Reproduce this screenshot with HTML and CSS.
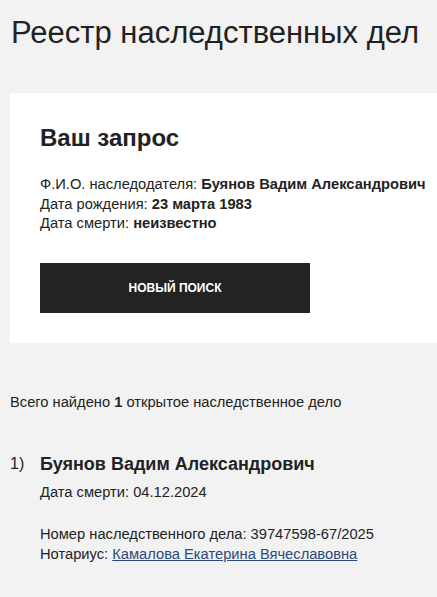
FILE: index.html
```html
<!DOCTYPE html>
<html>
<head>
  <meta charset="utf-8">
  <title>Реестр наследственных дел</title>
  <link rel="stylesheet" href="styles.css">
</head>
<body>
  <div class="page">
    <h1 class="title">Реестр наследственных дел</h1>

    <div class="card">
      <h2 class="card-title">Ваш запрос</h2>
      <div class="query">
        <div>Ф.И.О. наследодателя: <b>Буянов Вадим Александрович</b></div>
        <div>Дата рождения: <b>23 марта 1983</b></div>
        <div>Дата смерти: <b>неизвестно</b></div>
      </div>
      <div class="button">НОВЫЙ ПОИСК</div>
    </div>

    <div class="total">Всего найдено <b>1</b> открытое наследственное дело</div>

    <div class="result">
      <div class="result-num">1)</div>
      <div class="result-body">
        <div class="result-name">Буянов Вадим Александрович</div>
        <div class="result-line">Дата смерти: 04.12.2024</div>
        <div class="result-info">
          <div>Номер наследственного дела: 39747598-67/2025</div>
          <div>Нотариус: <a href="#" class="link">Камалова Екатерина Вячеславовна</a></div>
        </div>
      </div>
    </div>
  </div>
</body>
</html>
```

FILE: styles.css
```css
body {
  margin: 0;
  background-color: #f2f2f2;
  color: #222;
  font-family: "Liberation Sans", Arial, sans-serif;
  overflow: hidden;
}

.page {
  padding: 14px 0 20px 10px;
}

.title {
  margin: 0 0 0 1px;
  font-size: 31px;
  font-weight: normal;
  line-height: 38px;
  white-space: nowrap;
}

.card {
  margin-top: 41px;
  background-color: #fff;
  padding: 30px 0 30px 30px;
}

.card-title {
  margin: 0;
  font-size: 24px;
  font-weight: bold;
  line-height: 30px;
}

.query {
  margin-top: 22px;
  font-size: 14.7px;
  line-height: 19.5px;
  white-space: nowrap;
}

.button {
  margin-top: 29.5px;
  width: 270px;
  height: 50px;
  background-color: #232323;
  color: #fff;
  font-size: 12px;
  font-weight: bold;
  display: flex;
  align-items: center;
  justify-content: center;
  cursor: pointer;
}

.total {
  margin-top: 49px;
  font-size: 14.7px;
  line-height: 20px;
}

.result {
  margin-top: 40px;
  display: flex;
}

.result-num {
  width: 30px;
  font-size: 16px;
  line-height: 24px;
}

.result-name {
  font-size: 18px;
  font-weight: bold;
  line-height: 24px;
}

.result-line {
  margin-top: 6px;
  font-size: 14.7px;
  line-height: 20px;
}

.result-info {
  margin-top: 23px;
  font-size: 14.7px;
  line-height: 19.5px;
}

.link {
  color: #2b4a7c;
  text-decoration: underline;
}
```
